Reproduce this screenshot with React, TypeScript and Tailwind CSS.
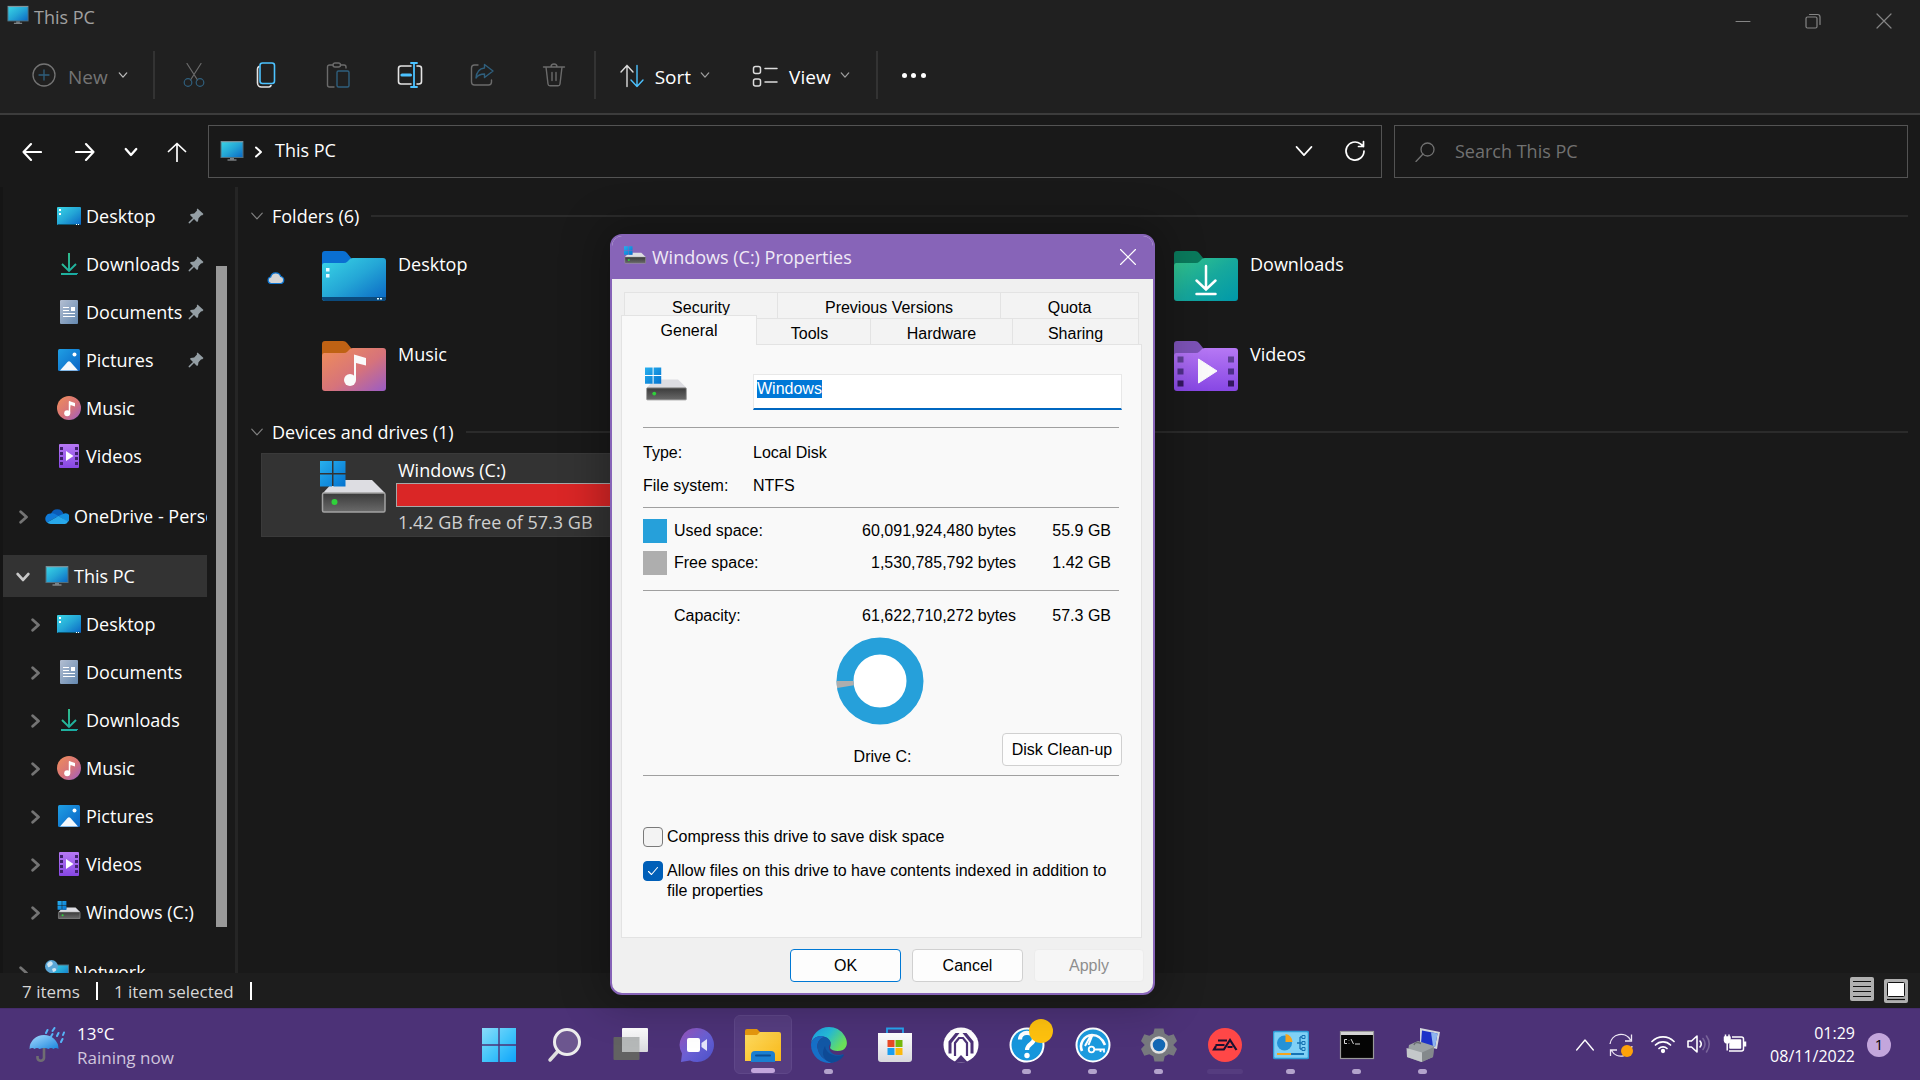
import { useEffect, useRef, type ReactNode } from "react";

type IconProps = { className?: string };

function Gradients() {
  return (
    <svg className="absolute h-0 w-0" aria-hidden="true">
      <defs>
        <linearGradient id="g-screen" x1="0" y1="0" x2="1" y2="1">
          <stop offset="0" stopColor="#3ad6e6" />
          <stop offset="0.5" stopColor="#24a6d6" />
          <stop offset="1" stopColor="#0a66c4" />
        </linearGradient>
        <linearGradient id="g-music" x1="0" y1="0" x2="1" y2="1">
          <stop offset="0" stopColor="#f08e58" />
          <stop offset="0.55" stopColor="#d6737b" />
          <stop offset="1" stopColor="#9a5cc6" />
        </linearGradient>
        <linearGradient id="g-green" x1="0" y1="0" x2="1" y2="1">
          <stop offset="0" stopColor="#36c78a" />
          <stop offset="0.5" stopColor="#17a99c" />
          <stop offset="1" stopColor="#0098aa" />
        </linearGradient>
        <linearGradient id="g-arrow" gradientUnits="userSpaceOnUse" x1="4" y1="0" x2="20" y2="24">
          <stop offset="0" stopColor="#38c98c" />
          <stop offset="1" stopColor="#15a8a6" />
        </linearGradient>
        <linearGradient id="g-video" x1="0" y1="0" x2="0" y2="1">
          <stop offset="0" stopColor="#b678f4" />
          <stop offset="1" stopColor="#8747e4" />
        </linearGradient>
        <linearGradient id="g-doc" x1="0" y1="0" x2="1" y2="1">
          <stop offset="0" stopColor="#b4bfd2" />
          <stop offset="1" stopColor="#6488b0" />
        </linearGradient>
        <linearGradient id="g-pic" x1="0" y1="0" x2="1" y2="1">
          <stop offset="0" stopColor="#1f9fe4" />
          <stop offset="1" stopColor="#0a63c4" />
        </linearGradient>
        <linearGradient id="g-drive" x1="0" y1="0" x2="0" y2="1">
          <stop offset="0" stopColor="#3a3a3a" />
          <stop offset="1" stopColor="#6a6a6a" />
        </linearGradient>
        <linearGradient id="g-win" x1="0" y1="0" x2="1" y2="1">
          <stop offset="0" stopColor="#28b0ee" />
          <stop offset="1" stopColor="#0473cf" />
        </linearGradient>
        <linearGradient id="g-start" x1="0" y1="0" x2="1" y2="1">
          <stop offset="0" stopColor="#8adcfa" />
          <stop offset="0.5" stopColor="#45c6fa" />
          <stop offset="1" stopColor="#0fa4fa" />
        </linearGradient>
        <linearGradient id="g-chat" x1="0" y1="0" x2="1" y2="1">
          <stop offset="0" stopColor="#9a52b8" />
          <stop offset="0.5" stopColor="#6a60d4" />
          <stop offset="1" stopColor="#4a50c8" />
        </linearGradient>
        <linearGradient id="g-folder" x1="0" y1="0" x2="1" y2="1">
          <stop offset="0" stopColor="#ffdc62" />
          <stop offset="1" stopColor="#f8b818" />
        </linearGradient>
        <linearGradient id="g-edge" x1="0" y1="0" x2="1" y2="0.5">
          <stop offset="0" stopColor="#1c9be4" />
          <stop offset="0.5" stopColor="#25bcd8" />
          <stop offset="1" stopColor="#6be05a" />
        </linearGradient>
        <linearGradient id="g-umbrella" x1="0" y1="0" x2="1" y2="1">
          <stop offset="0" stopColor="#a6dcff" />
          <stop offset="1" stopColor="#1a84dc" />
        </linearGradient>
        <linearGradient id="g-white" x1="0" y1="0" x2="0" y2="1">
          <stop offset="0" stopColor="#ffffff" />
          <stop offset="1" stopColor="#d8d8dc" />
        </linearGradient>
      </defs>
    </svg>
  );
}

/* ---------- file type icons ---------- */

function MonitorIcon({ className = "h-5 w-6" }: IconProps) {
  return (
    <svg viewBox="0 0 24 20" className={className} aria-hidden="true">
      <rect x="1" y="0.5" width="22" height="16" fill="url(#g-screen)" stroke="#53707e" />
      <path d="M1 0.8h22" stroke="#8b9aa2" />
      <path d="M10 17h4v1.5h-4z" fill="#77838a" />
      <path d="M7.500 18.500h9v1h-9z" fill="#a6adb0" />
    </svg>
  );
}

function DesktopIcon() {
  return (
    <svg viewBox="0 0 24 24" className="h-6 w-6" aria-hidden="true">
      <rect x="0" y="3" width="24" height="18" rx="1" fill="url(#g-screen)" />
      <path d="M2 5h2v2H2zM2 9h2v2H2z" fill="#fff" />
      <path d="M1 20h22v1H1z" fill="#0b5570" />
      <path d="M19 20h1v1h-1zM21 20h1v1h-1z" fill="#fff" />
    </svg>
  );
}

function DownloadsIcon() {
  return (
    <svg viewBox="0 0 24 24" className="h-6 w-6" fill="none" stroke="url(#g-arrow)" strokeWidth="1.900" aria-hidden="true">
      <path d="M12.010 1v18M5 12l7 7 7-7" />
      <path d="M4 22h16v.01" />
    </svg>
  );
}

function DocumentsIcon() {
  return (
    <svg viewBox="0 0 24 24" className="h-6 w-6" aria-hidden="true">
      <rect x="3" y="0" width="18" height="24" rx="1" fill="url(#g-doc)" />
      <path d="M6 7.500h6M6 10.500h6M6 13.500h12M6 16.500h12" stroke="#fff" strokeWidth="1.200" />
      <rect x="14" y="7" width="4" height="4" fill="#fff" />
    </svg>
  );
}

function PicturesIcon() {
  return (
    <svg viewBox="0 0 24 24" className="h-6 w-6" aria-hidden="true">
      <rect x="1" y="1" width="22" height="22" rx="1.500" fill="url(#g-pic)" />
      <path d="M3 22.500 10.500 14q1.500-1.500 3 0L21 22.500z" fill="#f4f8fc" />
      <circle cx="17.500" cy="6.500" r="2" fill="#fff" />
    </svg>
  );
}

function MusicIcon() {
  return (
    <svg viewBox="0 0 24 24" className="h-6 w-6" aria-hidden="true">
      <circle cx="12" cy="12" r="12" fill="url(#g-music)" />
      <path d="M12 17V5l6 2v3.500l-4.500-1.500" fill="#fff" />
      <path d="M12.500 17V5.500" stroke="#fff" strokeWidth="1.500" />
      <circle cx="10.200" cy="17.200" r="3" fill="#fff" />
    </svg>
  );
}

function VideosIcon() {
  return (
    <svg viewBox="0 0 24 24" className="h-6 w-6" aria-hidden="true">
      <rect x="2" y="0" width="20" height="24" rx="1" fill="url(#g-video)" />
      <path
        d="M3 3h3v3H3zM3 8h3v3H3zM3 13h3v3H3zM3 18h3v3H3zM18 3h3v3h-3zM18 8h3v3h-3zM18 13h3v3h-3zM18 18h3v3h-3z"
        fill="#40206e"
      />
      <path d="M9 7v10l7.500-5z" fill="#fff" />
    </svg>
  );
}

function OneDriveIcon() {
  return (
    <svg viewBox="0 0 24 24" className="h-6 w-6" aria-hidden="true">
      <path d="M6 10a6.500 6.500 0 0 1 12.500 0l-6 4z" fill="#0a5cb8" />
      <path d="M5.500 9.500A5.200 5.200 0 0 0 2 18.500L13.500 12l-3-1.800a8 8 0 0 0-5-.7z" fill="#0f7ad8" />
      <path d="M13.500 12l5-2.200A4.500 4.500 0 0 1 22.500 18z" fill="#1490e0" />
      <path d="M2 18.500 13.500 12l9.500 5.500a3.500 3.500 0 0 1-3 2.500H5.500a5 5 0 0 1-3.500-1.500z" fill="#28a8ea" />
    </svg>
  );
}

function NetworkIcon() {
  return (
    <svg viewBox="0 0 24 24" className="h-6 w-6" aria-hidden="true">
      <rect x="5" y="5" width="18.500" height="14" fill="url(#g-screen)" stroke="#53707e" />
      <circle cx="6.500" cy="6.500" r="6.500" fill="#5aa6d6" />
      <path d="M2 4q3-4 5-2t-1 4-3 1zM7 9q3-2 4 0t-3 3z" fill="#cfe6f2" />
    </svg>
  );
}

function DriveIcon({ className = "h-6 w-6", ring = "#333333" }: IconProps & { ring?: string }) {
  return (
    <svg viewBox="0 0 66 52" className={className} aria-hidden="true">
      <path d="M15 19h37l13 13H3z" fill="#dddde2" />
      <rect x="2.500" y="32" width="62.500" height="19" rx="1.500" fill="url(#g-drive)" stroke="#a2a2a2" strokeWidth="1.500" />
      <circle cx="14.500" cy="41" r="3" fill="#2fd23a" />
      <rect x="0" y="0" width="25" height="25" fill={ring} />
      <path d="M0 0h12v12H0zM13.500 0h12v12h-12zM0 13.500h12v12H0zM13.500 13.500h12v12h-12z" fill="url(#g-win)" />
    </svg>
  );
}

function FolderShape({ back, fill, children }: { back: string; fill: string; children: ReactNode }) {
  return (
    <svg viewBox="0 0 64 50" className="h-[50px] w-16" aria-hidden="true">
      <path d="M0 3a3 3 0 0 1 3-3h18a5 5 0 0 1 4 2l4 5v8H0z" fill={back} />
      <path d="M0 14.500q0-2.500 2-2.500h20q2 0 3.500-1.500L28 8q1-1 3-1h30a3 3 0 0 1 3 3v37a3 3 0 0 1-3 3H3a3 3 0 0 1-3-3z" fill={fill} />
      {children}
    </svg>
  );
}

function DesktopFolder() {
  return (
    <FolderShape back="#0a6fd2" fill="url(#g-screen)">
      <path d="M4 17h3.500v3.500H4zM4 23h3.500v3.500H4z" fill="#e8fbff" />
      <path d="M0 46h64v1a3 3 0 0 1-3 3H3a3 3 0 0 1-3-3z" fill="#0b4a7c" />
      <path d="M55 47h2v1.500h-2zM58 47h2v1.500h-2z" fill="#e8fbff" />
    </FolderShape>
  );
}

function MusicFolder() {
  return (
    <FolderShape back="#bf6214" fill="url(#g-music)">
      <path d="M32 13.500 44 17v7.500L34 22v17h-2z" fill="#fafafa" />
      <circle cx="28" cy="39" r="6" fill="#fafafa" />
      <path d="M32 14h2v25h-2z" fill="#fafafa" />
    </FolderShape>
  );
}

function DownloadsFolder() {
  return (
    <FolderShape back="#0a7a5c" fill="url(#g-green)">
      <path d="M32 15v23M22.500 29.500 32 38.500l9.500-9M22.500 43h19" fill="none" stroke="#fff" strokeWidth="2.500" strokeLinecap="round" />
    </FolderShape>
  );
}

function VideosFolder() {
  return (
    <FolderShape back="#7c52b6" fill="url(#g-video)">
      <path d="M3.500 15.500h6v6h-6zM54 15.500h6v6h-6z" fill="#5f3f96" />
      <path d="M3.500 27.500h6v6h-6zM54 27.500h6v6h-6z" fill="#4e2f8a" />
      <path d="M3.500 39.500h6v6h-6zM54 39.500h6v6h-6z" fill="#33175f" />
      <path d="M24.500 18v24L43 30z" fill="#fafafa" stroke="#fafafa" strokeLinejoin="round" />
    </FolderShape>
  );
}

function CloudIcon() {
  return (
    <svg viewBox="0 0 18 14" className="h-[14px] w-[18px]" aria-hidden="true">
      <path d="M4 12.500a3.300 3.300 0 0 1-.3-6.500 5.200 5.200 0 0 1 10-.5 3.600 3.600 0 0 1 .5 7z" fill="#d4d4d4" stroke="#0f78d4" strokeWidth="1.200" />
    </svg>
  );
}

/* ---------- line icons ---------- */

function Line({ className = "h-6 w-6", box = "0 0 24 24", width = 1.5, children }: IconProps & { box?: string; width?: number; children: ReactNode }) {
  return (
    <svg viewBox={box} className={className} fill="none" stroke="currentColor" strokeWidth={width} strokeLinecap="round" strokeLinejoin="round" aria-hidden="true">
      {children}
    </svg>
  );
}

function Chevron({ dir, className = "h-3 w-3", width = 1.5 }: IconProps & { dir: "down" | "right" | "up"; width?: number }) {
  const d = dir === "down" ? "M1.500 3.500 6 8.500l4.500-5" : dir === "up" ? "M1 9l5-6 5 6" : "M4 1.500 9 6l-5 4.500";
  return (
    <Line box="0 0 12 12" width={width} className={className}>
      <path d={d} />
    </Line>
  );
}

function PinIcon() {
  return (
    <svg viewBox="0 0 16 16" className="h-4 w-4 text-[#949ea4]" fill="currentColor" aria-hidden="true">
      <path d="M9.500.5 15.500 6 14 7.500l-.8-.2-2.700 3-.5 3L9 14l-3-3-4.500 4.500L.5 15 .8 14 5 10 2 7l.7-1 3.500-.5 2.800-3-.2-1z" />
    </svg>
  );
}

/* ---------- explorer ---------- */

const dim = "#6b6b6b";
const dimBlue = "#2f5f7d";
const blue = "#4cc2ff";

function ToolButton({ label, children }: { label: string; children: ReactNode }) {
  return (
    <button type="button" aria-label={label} className="flex h-12 w-12 items-center justify-center">
      {children}
    </button>
  );
}

function TitleBar() {
  return (
    <div className="flex h-[42px] justify-between">
      <div className="flex items-start gap-[5px] pl-[7px] pt-[5px] text-[#a0a0a0]">
        <MonitorIcon className="h-5 w-[22px]" />
        <h1 className="text-[18px] leading-[24px]">This PC</h1>
      </div>
      <div className="flex items-center text-[#858585]">
        <button type="button" aria-label="Minimise" className="flex h-full w-[70px] items-center justify-center">
          <Line box="0 0 16 16" className="h-4 w-4" width={1}><path d="M1 8.500h14" /></Line>
        </button>
        <button type="button" aria-label="Restore" className="flex h-full w-[70px] items-center justify-center">
          <Line box="0 0 16 16" className="h-4 w-4" width={1.2}>
            <rect x="1" y="4" width="11" height="11" rx="1.500" />
            <path d="M4.500 1.500h8a2.500 2.500 0 0 1 2.500 2.500v7.500" />
          </Line>
        </button>
        <button type="button" aria-label="Close" className="flex h-full w-[72px] items-center justify-center">
          <Line box="0 0 16 16" className="h-4 w-4" width={1.2}><path d="M1 1l14 14M15 1 1 15" /></Line>
        </button>
      </div>
    </div>
  );
}

function Toolbar() {
  return (
    <div className="flex h-[66px] items-center text-[19px]">
      <button type="button" className="ml-8 flex items-center text-[#747474]">
        <Line box="0 0 24 24" className="h-6 w-6" width={1.3}>
          <circle cx="12" cy="12" r="11" />
          <path d="M12 7v10M7 12h10" stroke={dimBlue} />
        </Line>
        <span className="ml-3 pt-1">New</span>
        <Chevron dir="down" className="ml-2.5 h-[10px] w-[10px] text-[#bdbdbd]" />
      </button>
      <div className="ml-[25px] h-12 w-0.5 bg-[#333333]" />
      <div className="ml-[15px] flex items-center gap-6">
        <ToolButton label="Cut">
          <Line width={1.2}>
            <path d="M5 0.500 15.500 17M19 0.500 8.500 17" stroke={dim} />
            <circle cx="6" cy="19.500" r="3.800" stroke={dimBlue} />
            <circle cx="18" cy="19.500" r="3.800" stroke={dimBlue} />
          </Line>
        </ToolButton>
        <ToolButton label="Copy">
          <Line box="0 0 24 26" className="h-[26px] w-6" width={1.6}>
            <path d="M5 4.500A3 3 0 0 0 3.500 7v14a4 4 0 0 0 4 4H15a3 3 0 0 0 2-1.500" stroke="#e4e4e4" />
            <rect x="6" y="1" width="14.500" height="20.500" rx="2.500" stroke={blue} />
          </Line>
        </ToolButton>
        <ToolButton label="Paste">
          <Line box="0 0 24 26" className="h-[26px] w-6" width={1.4}>
            <path d="M7 3H3.500A2 2 0 0 0 1.500 5v18a2 2 0 0 0 2 2H8M14.500 3H18a2 2 0 0 1 2 2v1" stroke={dim} />
            <rect x="7" y="1" width="7.500" height="4" rx="2" stroke={dim} />
            <rect x="11" y="9" width="12" height="16" rx="1.500" stroke={dimBlue} />
          </Line>
        </ToolButton>
        <ToolButton label="Rename">
          <Line box="0 0 26 26" className="h-[26px] w-[26px]" width={1.6}>
            <path d="M14 4H4a2.500 2.500 0 0 0-2.500 2.500v13A2.500 2.500 0 0 0 4 22h10M20 4h2a2.500 2.500 0 0 1 2.500 2.500v13A2.500 2.500 0 0 1 22 22h-2" stroke="#e4e4e4" />
            <path d="M17 1v24M14 1h6M14 25h6" stroke={blue} strokeWidth="1.800" />
            <path d="M5 13h8.500" stroke={blue} strokeWidth="3.200" />
          </Line>
        </ToolButton>
        <ToolButton label="Share">
          <Line width={1.4}>
            <path d="M8 2H4.500A3 3 0 0 0 1.500 5v14a3 3 0 0 0 3 3h14a3 3 0 0 0 3-3v-2" stroke={dim} />
            <path d="M14.500 1.500 23 8l-8.500 6.500v-3.500c-4 0-6.500 1-8.500 4 .5-6 3.500-9.500 8.500-10z" stroke={dimBlue} />
          </Line>
        </ToolButton>
        <ToolButton label="Delete">
          <Line width={1.4}>
            <path d="M1.500 4h21M4 4l2 17a2 2 0 0 0 2 1.800h8a2 2 0 0 0 2-1.800L20 4M9 4a3 3 0 0 1 6 0M10 9.500v8M14 9.500v8" stroke={dim} />
          </Line>
        </ToolButton>
      </div>
      <div className="ml-4 h-12 w-0.5 bg-[#333333]" />
      <button type="button" className="ml-6 flex items-center text-white">
        <Line box="0 0 24 24" className="mt-0.5 h-6 w-6" width={1.4}>
          <path d="M7 22.500V1.500M1 8l6-6.500L13 8" stroke="#dcdcdc" />
          <path d="M17 1.500v21M11 16l6 6.500L23 16" stroke={blue} />
        </Line>
        <span className="ml-[11px] pt-1">Sort</span>
        <Chevron dir="down" className="ml-[9px] h-[10px] w-[10px] text-[#a0a0a0]" />
      </button>
      <button type="button" className="ml-[42px] flex items-center text-white">
        <Line box="0 0 26 24" className="mt-0.5 h-6 w-[26px]" width={1.5}>
          <rect x="1.500" y="2.500" width="7" height="7" rx="2" stroke="#dcdcdc" />
          <rect x="1.500" y="15" width="7" height="7" rx="2" stroke="#dcdcdc" />
          <path d="M13 4.500h12M13 18h12" stroke="#dcdcdc" />
        </Line>
        <span className="ml-[11px] pt-1">View</span>
        <Chevron dir="down" className="ml-[9px] h-[10px] w-[10px] text-[#a0a0a0]" />
      </button>
      <div className="ml-[26px] h-12 w-0.5 bg-[#333333]" />
      <button type="button" aria-label="See more" className="ml-6 flex h-6 w-6 items-center justify-between">
        <span className="h-[5px] w-[5px] rounded-full bg-white" />
        <span className="h-[5px] w-[5px] rounded-full bg-white" />
        <span className="h-[5px] w-[5px] rounded-full bg-white" />
      </button>
    </div>
  );
}

function NavBar() {
  return (
    <div className="flex h-[72px] shrink-0 items-start pr-3 pt-2.5 text-[18px] text-white">
      <div className="flex h-[53px] w-[208px] shrink-0 items-center gap-[13px] pl-3">
        <button type="button" aria-label="Back" className="flex w-10 justify-center">
          <Line box="0 0 20 20" className="h-5 w-5" width={2.1}><path d="M19 10H1.500M9 2 1.500 10 9 18" /></Line>
        </button>
        <button type="button" aria-label="Forward" className="flex w-10 justify-center">
          <Line box="0 0 20 20" className="h-5 w-5" width={2.1}><path d="M1 10h17.500M11 2l7.500 8-7.500 8" /></Line>
        </button>
        <button type="button" aria-label="Recent locations" className="flex w-[26px] justify-center">
          <Chevron dir="down" className="h-[14px] w-[14px]" width={2} />
        </button>
        <button type="button" aria-label="Up" className="flex w-10 justify-center">
          <Line box="0 0 20 20" className="h-5 w-5" width={1.7}><path d="M10 19.500V1.500M1.500 9.500 10 1.500l8.500 8" /></Line>
        </button>
      </div>
      <div className="flex h-[53px] min-w-0 flex-1 items-center border border-[#535353] pb-0.5 pl-[11px]">
        <MonitorIcon className="h-5 w-6" />
        <Chevron dir="right" className="ml-2 mt-0.5 h-3 w-3" width={2} />
        <button type="button" className="ml-[11px]">This PC</button>
        <button type="button" aria-label="Previous locations" className="ml-auto flex w-10 justify-center">
          <Chevron dir="down" className="h-5 w-5" width={1} />
        </button>
        <button type="button" aria-label="Refresh" className="ml-[11px] mr-[6px] flex w-10 justify-center">
          <Line box="0 0 22 22" className="h-[22px] w-[22px]" width={1.7}>
            <path d="M20 11a9 9 0 1 1-3.500-7.100L19.500 6.500M19.500 1.500v5h-5" />
          </Line>
        </button>
      </div>
      <label className="ml-3 flex h-[53px] w-[514px] shrink-0 items-center border border-[#535353] pl-5 text-[#717171]">
        <Line box="0 0 20 20" className="h-5 w-5 shrink-0" width={1.3}>
          <circle cx="12.500" cy="7.500" r="6.500" />
          <path d="M8 12 1 19.500" />
        </Line>
        <input
          type="text"
          aria-label="Search This PC"
          placeholder="Search This PC"
          className="ml-5 min-w-0 flex-1 bg-transparent outline-none placeholder:text-[#717171]"
        />
      </label>
    </div>
  );
}

type Row = { name: string; icon: ReactNode };

function NavRow({ row, chevron, pinned, top, selected }: { row: Row; chevron?: "right" | "down"; pinned?: boolean; top?: boolean; selected?: boolean }) {
  return (
    <li className="flex h-12 shrink-0 items-center">
      <button
        type="button"
        className={
          "ml-[3px] flex h-[42px] w-[204px] items-center overflow-hidden whitespace-nowrap text-left " +
          (top ? "pl-[14px] " : "pl-[26px] ") +
          (selected ? "bg-[#333333]" : "")
        }
      >
        <span className="mr-4 flex h-3 w-3 shrink-0 justify-center">
          {chevron && <Chevron dir={chevron} width={2.4} className={selected ? "h-3.5 w-3.5 shrink-0 text-[#c8c8c8]" : "h-3.5 w-3.5 shrink-0 text-[#747474]"} />}
        </span>
        <span className="shrink-0">{row.icon}</span>
        <span className="ml-[5px] shrink-0">{row.name}</span>
        {pinned && <span className="ml-auto mr-[3px] shrink-0"><PinIcon /></span>}
      </button>
    </li>
  );
}

const pinnedRows: Row[] = [
  { name: "Desktop", icon: <DesktopIcon /> },
  { name: "Downloads", icon: <DownloadsIcon /> },
  { name: "Documents", icon: <DocumentsIcon /> },
  { name: "Pictures", icon: <PicturesIcon /> },
];

const quickRows: Row[] = [
  { name: "Music", icon: <MusicIcon /> },
  { name: "Videos", icon: <VideosIcon /> },
];

const pcRows: Row[] = [
  { name: "Desktop", icon: <DesktopIcon /> },
  { name: "Documents", icon: <DocumentsIcon /> },
  { name: "Downloads", icon: <DownloadsIcon /> },
  { name: "Music", icon: <MusicIcon /> },
  { name: "Pictures", icon: <PicturesIcon /> },
  { name: "Videos", icon: <VideosIcon /> },
  { name: "Windows (C:)", icon: <DriveIcon className="-mt-1 h-[18px] w-6" ring="#191919" /> },
];

function Sidebar() {
  return (
    <nav aria-label="Folders" className="flex w-[238px] shrink-0 overflow-hidden border-r-[3px] border-[#252525] text-[18px] text-white">
      <div className="flex w-[207px] flex-col gap-3 overflow-hidden border-l-[3px] border-[#151515] pt-[5px]">
        <ul className="-ml-[3px] flex flex-col">
          {pinnedRows.map((r) => <NavRow key={r.name} row={r} pinned />)}
          {quickRows.map((r) => <NavRow key={r.name} row={r} />)}
        </ul>
        <ul className="-ml-[3px]">
          <NavRow row={{ name: "OneDrive - Personal", icon: <OneDriveIcon /> }} chevron="right" top />
        </ul>
        <ul className="-ml-[3px] flex flex-col">
          <NavRow row={{ name: "This PC", icon: <MonitorIcon className="h-5 w-6" /> }} chevron="down" top selected />
          {pcRows.map((r) => <NavRow key={r.name} row={r} chevron="right" />)}
        </ul>
        <ul className="-ml-[3px]">
          <NavRow row={{ name: "Network", icon: <NetworkIcon /> }} chevron="right" top />
        </ul>
      </div>
      <div className="ml-[9px] w-[11px] pb-[46px] pt-[79px]">
        <div className="h-full bg-[#999999]" />
      </div>
    </nav>
  );
}

function GroupHeading({ children }: { children: ReactNode }) {
  return (
    <div className="flex h-[34px] items-center text-[18px] text-white">
      <Chevron dir="down" width={1} className="h-[14px] w-[14px] text-[#808080]" />
      <h2 className="ml-2">{children}</h2>
      <div className="ml-3 h-0.5 flex-1 bg-[#2b2b2b]" />
    </div>
  );
}

function FolderTile({ name, icon, cloud, className = "" }: { name: string; icon: ReactNode; cloud?: boolean; className?: string }) {
  return (
    <li className={"h-[84px] pt-[18px] " + className}>
      <button type="button" className="flex items-start text-left">
        <span className="w-[61px] pl-1.5 pt-5">{cloud && <CloudIcon />}</span>
        {icon}
        <span className="ml-3 text-[18px] leading-[26px] text-white">{name}</span>
      </button>
    </li>
  );
}

function Content() {
  return (
    <main className="min-w-0 flex-1 overflow-hidden pl-3 pr-3 pt-3">
      <GroupHeading>Folders (6)</GroupHeading>
      <ul className="ml-[11px] grid grid-cols-[repeat(3,426px)] gap-y-1.5">
        <FolderTile name="Desktop" icon={<DesktopFolder />} cloud />
        <FolderTile name="Downloads" icon={<DownloadsFolder />} className="col-start-3" />
        <FolderTile name="Music" icon={<MusicFolder />} />
        <FolderTile name="Videos" icon={<VideosFolder />} className="col-start-3" />
      </ul>
      <div className="mt-2">
        <GroupHeading>Devices and drives (1)</GroupHeading>
      </div>
      <ul className="ml-[11px] mt-1 grid grid-cols-[repeat(3,426px)]">
        <li>
          <button type="button" className="flex h-[84px] w-full items-start border border-[#3a3a3a] bg-[#333333] pl-[58px] text-left">
            <DriveIcon className="mt-[7px] h-[52px] w-[66px]" />
            <span className="ml-2.5 flex flex-1 flex-col pr-4 pt-[3px] text-[18px] leading-[26px]">
              <span className="pl-0.5 text-white">Windows (C:)</span>
              <span className="h-6 border border-[#a8a8a8] bg-[#da2626]" />
              <span className="pl-0.5 pt-0.5 text-[#d0d0d0]">1.42 GB free of 57.3 GB</span>
            </span>
          </button>
        </li>
      </ul>
    </main>
  );
}

function StatusBar() {
  return (
    <footer className="flex h-[35px] shrink-0 items-center bg-[#1d1d1d] pr-3 text-[17px] text-[#d6d6d6]">
      <span className="ml-[22px] pt-0.5">7 items</span>
      <span className="ml-4 h-[18px] w-0.5 bg-white" />
      <span className="ml-4 pt-0.5">1 item selected</span>
      <span className="ml-4 h-[18px] w-0.5 bg-white" />
      <div className="ml-auto flex gap-2.5">
        <button type="button" aria-label="Details view" className="-mt-0.5 h-6 w-6">
          <svg viewBox="0 0 24 24" className="h-6 w-6" aria-hidden="true">
            <rect width="24" height="24" rx="2" fill="#b0b0b0" />
            <path d="M3 4.500h18M3 9.500h18M3 14.500h18M3 19.500h18" stroke="#111" strokeWidth="1.200" />
          </svg>
        </button>
        <button type="button" aria-label="Large icons view" className="h-6 w-6">
          <svg viewBox="0 0 24 24" className="h-6 w-6" aria-hidden="true">
            <rect width="24" height="24" rx="2" fill="#b0b0b0" />
            <rect x="3.500" y="3.500" width="17" height="14" rx="1" fill="#fff" stroke="#111" />
            <path d="M3 20.500h18" stroke="#111" strokeWidth="1.200" />
          </svg>
        </button>
      </div>
    </footer>
  );
}

/* ---------- properties dialog ---------- */

const tabBase = "border-l border-t border-[#e3e3e3] bg-[#f3f3f3] text-center last:border-r";

function Donut() {
  return (
    <svg viewBox="0 0 88 88" className="h-[88px] w-[88px]" role="img" aria-label="Used and free space on drive C">
      <circle cx="44" cy="44" r="35" fill="#ffffff" stroke="#26a0da" strokeWidth="17" />
      <path d="M0.500 44h17l.4 4.300-16.700 2.700q-.7-3.500-.7-7z" fill="#aeaeae" />
    </svg>
  );
}

const checkStyle =
  "col-start-1 row-start-1 h-5 w-5 appearance-none rounded-[4px] border border-[#7a7a7a] bg-[#f3f3f3] checked:border-[#005fb8] checked:bg-[#005fb8]";

function CheckOption({ id, checked, children }: { id: string; checked?: boolean; children: ReactNode }) {
  return (
    <div className="flex items-start gap-1">
      <span className="grid shrink-0 place-items-center">
        <input id={id} type="checkbox" defaultChecked={checked} className={checkStyle} />
        {checked && (
          <Line box="0 0 12 12" width={1.1} className="pointer-events-none col-start-1 row-start-1 h-3 w-3 text-white">
            <path d="M1.500 6.500 4.500 9.500l6-7" />
          </Line>
        )}
      </span>
      <label htmlFor={id}>{children}</label>
    </div>
  );
}

function SpaceRow({ color, label, bytes, size }: { color: string; label: string; bytes: string; size: string }) {
  return (
    <tr className="h-8">
      <td className="w-[31px] p-0"><span className={"block h-6 w-6 " + color} /></td>
      <th scope="row" className="p-0 text-left font-normal">{label}</th>
      <td className="p-0 text-right">{bytes}</td>
      <td className="w-[103px] p-0 pr-2 text-right">{size}</td>
    </tr>
  );
}

function PropertiesDialog() {
  const nameRef = useRef<HTMLInputElement>(null);
  useEffect(() => {
    nameRef.current?.focus();
    nameRef.current?.select();
  }, []);

  return (
    <section
      role="dialog"
      aria-labelledby="dialog-title"
      className="absolute left-[610px] top-[234px] w-[545px] overflow-hidden rounded-[12px] border-2 border-[#8764b8] bg-[#f0f0f0] font-['Liberation_Sans',Arial,sans-serif] text-[16px] leading-5 text-black shadow-[0_0_40px_10px_rgba(0,0,0,0.25)]"
    >
      <header className="flex h-[43px] items-center bg-[#8764b8] pb-0.5 pl-3 pr-[17px]">
        <DriveIcon className="-mt-1 h-[18px] w-[22px]" ring="#8764b8" />
        <h2 id="dialog-title" className="ml-[6px] font-['Open_Sans','Noto_Sans',sans-serif] text-[18px] text-[#f0eaf6]">
          Windows (C:) Properties
        </h2>
        <button type="button" aria-label="Close" className="ml-auto text-white">
          <Line box="0 0 16 16" className="h-4 w-4" width={1.2}><path d="M.5.5l15 15M15.500.5l-15 15" /></Line>
        </button>
      </header>

      <div role="tablist" className="pl-[9px] pr-[14px] pt-[13px]">
        <div className="flex h-[26px] pl-[3px] leading-[30px]">
          <button type="button" role="tab" className={tabBase + " w-[153px]"}>Security</button>
          <button type="button" role="tab" className={tabBase + " w-[223px]"}>Previous Versions</button>
          <button type="button" role="tab" className={tabBase + " flex-1"}>Quota</button>
        </div>
        <div className="flex h-[26px] leading-[30px]">
          <button
            type="button"
            role="tab"
            aria-selected="true"
            className="relative -mt-[3px] h-[30px] w-[136px] border border-b-0 border-[#e3e3e3] bg-[#f9f9f9] text-center"
          >
            General
          </button>
          <button type="button" role="tab" className="w-[113px] border-t border-[#e3e3e3] bg-[#f3f3f3] pr-2 text-center">Tools</button>
          <button type="button" role="tab" className={tabBase + " w-[142px]"}>Hardware</button>
          <button type="button" role="tab" className={tabBase + " flex-1"}>Sharing</button>
        </div>
      </div>

      <div role="tabpanel" className="ml-[9px] mr-[11px] border border-[#e3e3e3] bg-[#f9f9f9] pb-9 pl-[21px] pr-[19px] pt-[21px]">
        <div className="flex items-start">
          <div className="w-[110px] pl-0.5">
            <DriveIcon className="h-[36px] w-[42px]" ring="#ffffff" />
          </div>
          <input
            ref={nameRef}
            type="text"
            aria-label="Volume label"
            defaultValue="Windows"
            className="mt-2 h-9 min-w-0 flex-1 border border-b-2 border-[#e8e8e8] border-b-[#0067c0] bg-white pb-1.5 pl-[3px] pt-0 outline-none selection:bg-[#0078d7] selection:text-white"
          />
        </div>
        <hr className="mr-[3px] mt-[17px] border-[#a0a0a0]" />
        <dl className="mt-[15px] grid grid-cols-[110px_1fr] gap-y-[13px]">
          <dt>Type:</dt>
          <dd>Local Disk</dd>
          <dt>File system:</dt>
          <dd>NTFS</dd>
        </dl>
        <hr className="mr-[3px] mt-[11px] border-[#a0a0a0]" />

        <div className="mr-[3px] pt-[7px]">
          <table className="w-full border-collapse">
            <tbody>
              <SpaceRow color="bg-[#26a0da]" label="Used space:" bytes="60,091,924,480 bytes" size="55.9 GB" />
              <SpaceRow color="bg-[#aeaeae]" label="Free space:" bytes="1,530,785,792 bytes" size="1.42 GB" />
              <tr className="h-[11px]"><td colSpan={4} className="p-0" /></tr>
              <tr className="h-[47px] border-t border-[#a0a0a0]">
                <td className="p-0" />
                <th scope="row" className="p-0 pt-1 text-left font-normal">Capacity:</th>
                <td className="p-0 pt-1 text-right">61,622,710,272 bytes</td>
                <td className="p-0 pr-2 pt-1 text-right">57.3 GB</td>
              </tr>
            </tbody>
          </table>
        </div>

        <div className="flex justify-center pr-1.5"><Donut /></div>
        <div className="mt-2 grid grid-cols-[120px_1fr_120px] items-end">
          <span />
          <span className="text-center">Drive C:</span>
          <button type="button" className="mb-px h-[33px] rounded-[4px] border border-[#d0d0d0] bg-[#fdfdfd]">Disk Clean-up</button>
        </div>
        <hr className="mr-[3px] mt-2 border-[#a0a0a0]" />

        <div className="mt-[51px] flex flex-col gap-[14px]">
          <CheckOption id="compress">Compress this drive to save disk space</CheckOption>
          <CheckOption id="index" checked>
            Allow files on this drive to have contents indexed in addition to file properties
          </CheckOption>
        </div>
      </div>

      <div className="flex justify-end gap-[11px] pb-[11px] pr-[9px] pt-[11px]">
        <button type="button" className="h-[33px] w-[111px] rounded-[4px] border border-[#0078d4] bg-[#fdfdfd]">OK</button>
        <button type="button" className="h-[33px] w-[111px] rounded-[4px] border border-[#d0d0d0] bg-[#fdfdfd]">Cancel</button>
        <button type="button" disabled className="h-[33px] w-[110px] rounded-[4px] border border-[#ececec] bg-[#f6f6f6] text-[#8e8e8e]">Apply</button>
      </div>
    </section>
  );
}

/* ---------- taskbar ---------- */

function AppSvg({ children }: { children: ReactNode }) {
  return (
    <svg viewBox="0 0 36 36" className="h-9 w-9" aria-hidden="true">
      {children}
    </svg>
  );
}

const apps: { name: string; state?: "dot" | "active" | "wide"; icon: ReactNode }[] = [
  {
    name: "Start",
    icon: <path d="M1 1h16.300v16.300H1zM18.700 1H35v16.300H18.700zM1 18.700h16.300V35H1zM18.700 18.700H35V35H18.700z" fill="url(#g-start)" />,
  },
  {
    name: "Search",
    icon: (
      <>
        <path d="M3 33 12 23" stroke="#dedede" strokeWidth="3.500" strokeLinecap="round" />
        <circle cx="20" cy="15" r="12.500" fill="#6c568f" stroke="#ececec" strokeWidth="3" />
      </>
    ),
  },
  {
    name: "Task view",
    icon: (
      <>
        <rect x="0.500" y="10" width="26" height="23" rx="1" fill="#626262" />
        <rect x="9" y="1" width="26" height="24" rx="1" fill="url(#g-white)" />
        <path d="M9 10h17.500v15H9z" fill="#b5b8b8" />
      </>
    ),
  },
  {
    name: "Chat",
    icon: (
      <>
        <path d="M18 1a17 17 0 1 1-7 32.500L2 35l1-8.500A17 17 0 0 1 18 1z" fill="url(#g-chat)" />
        <rect x="8" y="11" width="13" height="14" rx="2" fill="#fff" />
        <path d="M22.500 16 28 12v12l-5.500-4z" fill="#e4e4fa" />
      </>
    ),
  },
  {
    name: "File Explorer",
    state: "active",
    icon: (
      <>
        <path d="M0 4q0-2 2-2h10l4 4v6H0z" fill="#e6980e" />
        <path d="M0 8h12l3-3h19a2 2 0 0 1 2 2v27H0z" fill="url(#g-folder)" />
        <path d="M6 35V28a4 4 0 0 1 4-4h16a4 4 0 0 1 4 4v7z" fill="#1a7fd0" />
        <path d="M11 28.500h14" stroke="#0a4f92" strokeWidth="2" strokeLinecap="round" />
      </>
    ),
  },
  {
    name: "Edge",
    state: "dot",
    icon: (
      <>
        <path d="M18 0a18 18 0 0 0-18 18c0-7 8-11 14-8 5 2 7 6 5 11 2 3 8 4 13 2 6-4 4-11 1-15A18 18 0 0 0 18 0z" fill="url(#g-edge)" />
        <path d="M0 18c0-7 8-11 14-8-6 1-9 7-7 13 2 7 8 11 14 12.700A18 18 0 0 1 0 18z" fill="#1670c8" />
        <path d="M14 10c-6 1-9 7-7 13 2 7 8 11 14 12.700 5-.7 9-4 11.500-8.700-7 3-15-1-14.500-7 0-3 3-3 1-6-1-2-2.500-3.500-5-4z" fill="#1258a6" />
        <path d="M14 19c1 7 8 11 16 9.500 1.500-.4 2.500-1 3-.5-2 4-6.500 7-12.500 7.700C14 34 9 28 14 19z" fill="#0e4a96" />
      </>
    ),
  },
  {
    name: "Microsoft Store",
    icon: (
      <>
        <path d="M10 6V1.500h16V6" fill="none" stroke="#26a4ee" strokeWidth="1.800" />
        <path d="M1 6h34v26a3 3 0 0 1-3 3H4a3 3 0 0 1-3-3z" fill="url(#g-white)" />
        <path d="M10.500 13h7v7h-7z" fill="#e84a26" />
        <path d="M18.500 13h7v7h-7z" fill="#76b80c" />
        <path d="M10.500 21h7v7h-7z" fill="#1a9ef0" />
        <path d="M18.500 21h7v7h-7z" fill="#fbb80c" />
      </>
    ),
  },
  {
    name: "Home",
    icon: (
      <>
        <circle cx="18" cy="18" r="17.500" fill="#fff" />
        <path d="M5.500 26.500V14.500L12.500 6h4L8.500 16v10.500z" fill="#4c3277" />
        <path d="M30.500 26.500V14.500L23.500 6h-4l8 10v10.500z" fill="#4c3277" />
        <path d="M12 29V16l4-5h4l4 5v13" fill="none" stroke="#4c3277" strokeWidth="2.200" />
        <path d="M11 35.500 18 28l7 7.500z" fill="#4c3277" />
      </>
    ),
  },
  {
    name: "Get Help",
    state: "dot",
    icon: (
      <>
        <circle cx="18" cy="18" r="16.500" fill="#1696dc" stroke="#fff" strokeWidth="2" />
        <path d="M11 12.500c0-9 14-8.500 14-.5 0 5-7 5-7 11" fill="none" stroke="#fff" strokeWidth="4.200" />
        <circle cx="18" cy="28.500" r="2.700" fill="#fff" />
      </>
    ),
  },
  {
    name: "Optimizer",
    state: "dot",
    icon: (
      <>
        <circle cx="18" cy="18" r="16.500" fill="#1c9ade" stroke="#fff" strokeWidth="2" />
        <path d="M7 24a11.500 11.500 0 0 1 10-16q9 0 13 10" fill="none" stroke="#fff" strokeWidth="2.600" />
        <path d="M10 19 16 8M13.500 18l4-10" stroke="#fff" strokeWidth="2" />
        <circle cx="16.500" cy="22.500" r="2.800" fill="none" stroke="#fff" strokeWidth="1.800" />
        <path d="M19.500 22.500H29v3M25.500 22.500v2.500" fill="none" stroke="#fff" strokeWidth="1.800" />
      </>
    ),
  },
  {
    name: "Settings",
    state: "dot",
    icon: (
      <>
        <path
          d="M13.500 1.500h9l1.200 5 4 2.300 5-1.500L36 14l-3.700 4 3.700 4-3.300 6.700-5-1.500-4 2.300-1.200 5h-9l-1.200-5-4-2.300-5 1.500L0 22l3.700-4L0 14l3.300-6.700 5 1.500 4-2.300z"
          fill="#77797e"
        />
        <circle cx="18" cy="18" r="7.500" fill="#1468b4" stroke="#e4e4e4" strokeWidth="2.500" />
      </>
    ),
  },
  {
    name: "EA",
    state: "wide",
    icon: (
      <>
        <circle cx="18" cy="18" r="17" fill="#ff4747" />
        <path d="M11 13.500h9M8.500 18h9M17.500 22.500H7l2-3.500M16.500 23l6.500-10 6.500 10M20.500 20h5" fill="none" stroke="#1b1030" strokeWidth="2.200" />
      </>
    ),
  },
  {
    name: "Control Panel",
    state: "dot",
    icon: (
      <>
        <rect x="0.500" y="4.500" width="35" height="27" rx="1.500" fill="#7fd0f6" stroke="#2c9cd8" strokeWidth="1.500" />
        <circle cx="11.500" cy="16" r="7.500" fill="#2492d8" />
        <path d="M12.500 15V7a8 8 0 0 1 7 8z" fill="#f4a41e" />
        <path d="M24 16h3M27 10v12M27 10h2M27 16h2M27 22h2" stroke="#1673b4" strokeWidth="1.300" fill="none" />
        <path d="M29 8.500h3v3h-3zM29 14.500h3v3h-3zM29 20.500h3v3h-3z" fill="none" stroke="#1673b4" />
        <path d="M4 27h14" stroke="#f4a41e" strokeWidth="2" />
        <path d="M18 27h13" stroke="#1673b4" strokeWidth="2" />
      </>
    ),
  },
  {
    name: "Command Prompt",
    state: "dot",
    icon: (
      <>
        <rect x="1.500" y="4.500" width="33" height="27" fill="#050505" stroke="#9a9a9a" strokeWidth="1.200" />
        <path d="M2 5h32v3H2z" fill="#d4d4d4" />
        <path d="M8 12.500H5.500v4H8M10 13v.5M10 16v.5M12 12l2.500 5M16 17h5" fill="none" stroke="#d8d8d8" />
      </>
    ),
  },
  {
    name: "Remote tools",
    state: "dot",
    icon: (
      <>
        <path d="M15 1 35 5l-3 17-17-4z" fill="#d4d8dc" />
        <path d="M17 3.500 32.500 6.500 30 20 16 16.500z" fill="#1c32c8" />
        <path d="M26 5.200l6.500 1.300L30 20l-2-.5z" fill="#8eb4ee" />
        <path d="M4 18l9-4 16 5-1 11-12 5-14-5z" fill="#9ca2a4" />
        <path d="M1.500 21 17 25.500V35L2 30z" fill="#c4c8ca" />
        <path d="M17 25.500 29 20l-1 10-11 5z" fill="#84898c" />
        <path d="M9 18q1-4 7-1.500" stroke="#6a6e72" strokeWidth="1.500" fill="none" />
      </>
    ),
  },
];

function Taskbar() {
  return (
    <div className="relative flex h-[72px] shrink-0 items-stretch border-t border-[#452c6c] bg-[#4c3277] text-white">
      <button type="button" className="flex flex-1 items-center pl-[29px] pt-0.5 text-left text-[17px] leading-6">
        <svg viewBox="0 0 36 38" className="mr-3 h-[38px] w-9 shrink-0" aria-hidden="true">
          <path d="M15 11v20a3.300 3.300 0 0 1-6.500 0v-2" fill="none" stroke="#6f6d72" strokeWidth="2.600" />
          <path d="M0.500 22A14.500 14 0 0 1 29.500 22q-3-2-5 0-2.500-2-5 0-4-2-9 0-2.500-2-5 0-2-2-5 0z" fill="url(#g-umbrella)" />
          <path d="m17 6 1.500-3M23.500 4l2-3M22 9.500l1.500-2.500M28 9l1.500-3M34 8l1-2.500M32 15l1.500-3" stroke="#56b4f8" strokeWidth="2" strokeLinecap="round" />
        </svg>
        <span className="flex flex-col">
          <span>13°C</span>
          <span className="text-[#d0c6dd]">Raining now</span>
        </span>
      </button>
      <ul className="flex items-stretch pl-px">
        {apps.map((a) => (
          <li key={a.name} className="relative flex w-[66px] justify-center">
            <button
              type="button"
              aria-label={a.name}
              className={
                "relative my-1.5 flex items-center justify-center rounded-md " +
                (a.state === "active" ? "w-[58px] border border-[#5f4789] bg-[#563d80]" : "w-[60px]")
              }
            >
              <AppSvg>{a.icon}</AppSvg>
              {a.name === "Get Help" && <span className="absolute right-1 top-1 h-6 w-6 rounded-full bg-[#ffc20e]" />}
              {a.state === "dot" && <span className="absolute bottom-0 h-[5px] w-[9px] rounded-full bg-[#b3a3cc]" />}
              {a.state === "active" && <span className="absolute bottom-0 h-[5px] w-6 rounded-full bg-[#c3a6dc]" />}
              {a.state === "wide" && <span className="absolute bottom-0 h-[5px] w-9 rounded-full bg-[#553c7f]" />}
            </button>
          </li>
        ))}
      </ul>
      <div className="flex flex-1 items-center justify-end pr-[29px]">
        <button type="button" aria-label="Show hidden icons" className="mr-[14px]">
          <Chevron dir="up" className="h-5 w-5" width={0.8} />
        </button>
        <button type="button" aria-label="Updates" className="mr-[18px]">
          <svg viewBox="0 0 24 24" className="h-6 w-6" aria-hidden="true">
            <path d="M1 11A11 11 0 0 1 21.500 7M22.500 1.500V8H16M23 13A11 11 0 0 1 2.500 17.500M1.500 23v-6H8" fill="none" stroke="#eee8f4" strokeWidth="1.300" />
            <circle cx="18" cy="18" r="6" fill="#ffa20a" />
          </svg>
        </button>
        <button type="button" aria-label="Network" className="mr-3">
          <svg viewBox="0 0 24 24" className="h-6 w-6" fill="none" stroke="#fff" strokeWidth="1.700" strokeLinecap="round" aria-hidden="true">
            <path d="M1 8.500a15.500 15.500 0 0 1 22 0M4.500 12a10.500 10.500 0 0 1 15 0M8 15.500a5.600 5.600 0 0 1 8 0" />
            <circle cx="12" cy="18" r="1.300" fill="#fff" />
          </svg>
        </button>
        <button type="button" aria-label="Volume" className="mr-3">
          <svg viewBox="0 0 24 24" className="h-6 w-6" fill="none" stroke="#fff" strokeWidth="1.600" strokeLinecap="round" strokeLinejoin="round" aria-hidden="true">
            <path d="M1 8h3.500L10 3v16l-5.500-5H1zM13 8q2.500 3 0 6" />
            <path d="M16 5.500q4 5.500 0 11M19.500 3q5.500 8 0 16" stroke="#79659a" />
          </svg>
        </button>
        <button type="button" aria-label="Battery" className="mr-[23px]">
          <svg viewBox="0 0 24 24" className="h-6 w-6" fill="none" stroke="#fff" strokeWidth="1.500" strokeLinejoin="round" aria-hidden="true">
            <path d="M9 4h9.500a2 2 0 0 1 2 2v10a2 2 0 0 1-2 2H6" />
            <path d="M8 7h9.500v8H7v-4z" fill="#fff" />
            <path d="M22 8.500v5" strokeWidth="2.500" />
            <path d="M1.500 4h5.500v3.500a2.800 2.800 0 0 1-5.500 0zM2.500 1.500V4M6 1.500V4M4.200 10v7.500" fill="#fff" />
          </svg>
        </button>
        <button type="button" className="text-right text-[16px] leading-[23px]">
          <span className="block">01:29</span>
          <span className="block">08/11/2022</span>
        </button>
        <button type="button" aria-label="1 notification" className="ml-3 flex h-6 w-6 items-center justify-center rounded-full bg-[#c3a6dc] text-[15px] text-black">
          1
        </button>
      </div>
    </div>
  );
}

export default function App() {
  return (
    <div className="relative flex h-screen flex-col overflow-hidden bg-[#191919] font-['Open_Sans','Noto_Sans',sans-serif]">
      <Gradients />
      <header className="shrink-0 border-b-2 border-[#3c3c3c] bg-[#202020] pb-[5px]">
        <TitleBar />
        <Toolbar />
      </header>
      <NavBar />
      <div className="flex min-h-0 flex-1">
        <Sidebar />
        <Content />
      </div>
      <StatusBar />
      <Taskbar />
      <PropertiesDialog />
    </div>
  );
}
